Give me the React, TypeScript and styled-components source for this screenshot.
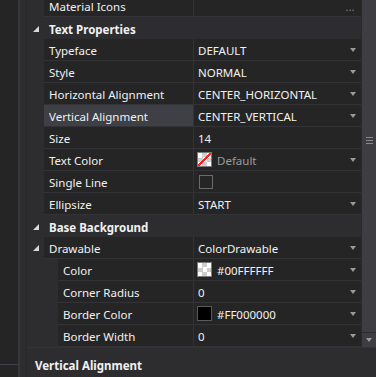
import React from 'react';
import styled, { createGlobalStyle } from 'styled-components';

const Global = createGlobalStyle`
  html, body { margin: 0; padding: 0; background: #2d2d30; }
  body {
    font-family: "Noto Sans", "Liberation Sans", sans-serif;
    font-size: 11.5px;
    color: #f1f1f1;
    overflow: hidden;
  }
`;

const Frame = styled.div`
  display: flex;
  width: 376px;
  height: 377px;
  overflow: hidden;
  background: #2d2d30;
`;

const LeftPanel = styled.div`
  width: 18px;
  display: flex;
  flex-direction: column;
  background: #252526;
  border-right: 2px solid #38383c;
`;

const LeftTop = styled.div`
  height: 364px;
  border-bottom: 1px solid #3f3f46;
`;

const Splitter = styled.div`
  width: 6px;
  background: #2d2d30;
  border-right: 1px solid #28282a;
`;

const Main = styled.div`
  flex: 1;
  display: flex;
  flex-direction: column;
  min-width: 0;
`;

const GridArea = styled.div`
  height: 347px;
  display: flex;
  overflow: hidden;
`;

const Grid = styled.div`
  flex: 1;
  display: flex;
  flex-direction: column;
  overflow: hidden;
  background: #2d2d30;
  & > :first-child { margin-top: -5px; }
`;

const Row = styled.div<{ $indent: number }>`
  display: grid;
  grid-template-columns: ${p => p.$indent}px ${p => 167 - p.$indent}px 1fr;
  height: 22px;
  flex-shrink: 0;
`;

const Gutter = styled.div`
  background: #2d2d30;
  display: flex;
  align-items: center;
  padding-left: 6px;
`;

const NameCell = styled.div<{ $selected?: boolean }>`
  background: ${p => (p.$selected ? '#3f3f46' : '#252526')};
  border-bottom: 1px solid #333337;
  border-right: 1px solid #333337;
  padding: 2px 0 0 5px;
  display: flex;
  align-items: center;
  white-space: nowrap;
  overflow: hidden;
`;

const ValueCell = styled.div`
  background: #252526;
  border-bottom: 1px solid #333337;
  display: flex;
  align-items: center;
  gap: 5px;
  padding: 2px 5px 0 4px;
  white-space: nowrap;
  overflow: hidden;
`;

const Muted = styled.span`
  color: #9a9a9a;
`;

const HeaderRow = styled.div`
  height: 22px;
  flex-shrink: 0;
  display: flex;
  align-items: center;
  background: #2d2d30;
  font-weight: 700;
  padding-top: 2px;
  box-sizing: border-box;
`;

const Expander = styled.span<{ $inHeader?: boolean }>`
  width: 0;
  height: 0;
  border-style: solid;
  border-width: 0 0 6px 6px;
  border-color: transparent transparent #d8d8d8 transparent;
  margin: ${p => (p.$inHeader ? '0 10px 1px 6px' : '0')};
`;

const Arrow = styled.span`
  margin-left: auto;
  margin-bottom: 1px;
  width: 0;
  height: 0;
  border-left: 3.5px solid transparent;
  border-right: 3.5px solid transparent;
  border-top: 4px solid #9a9a9a;
`;

const Ellipsis = styled.span`
  margin-left: auto;
  margin-right: 1px;
  color: #8f8f8f;
  font-size: 10px;
  letter-spacing: 0.5px;
  line-height: 1;
`;

const checker = 'repeating-conic-gradient(#cdcdcd 0 25%, #ffffff 0 50%) 0 0 / 9px 9px';

const Swatch = styled.span<{ $kind: 'none' | 'transparent' | 'black' }>`
  width: 13px;
  height: 13px;
  flex-shrink: 0;
  margin: 0 0 2px -1px;
  border: 1px solid ${p => (p.$kind === 'black' ? '#5a5a5a' : '#7a7a7a')};
  background: ${p =>
    p.$kind === 'black'
      ? '#000000'
      : p.$kind === 'none'
      ? `linear-gradient(to bottom right, transparent calc(50% - 0.8px), #ff2020 calc(50% - 0.8px), #ff2020 calc(50% + 0.8px), transparent calc(50% + 0.8px)), ${checker}`
      : checker};
`;

const CheckBox = styled.span`
  width: 12px;
  height: 12px;
  margin: 0 0 2px 1px;
  border: 1px solid #6a6a6a;
`;

const ScrollBar = styled.div`
  width: 14px;
  display: flex;
  flex-direction: column;
  background: #3e3e42;
  border-left: 1px solid #2a2a2c;
`;

const Thumb = styled.div`
  height: 280px;
  display: flex;
  flex-direction: column;
  align-items: center;
  justify-content: center;
  gap: 2px;
`;

const GripLine = styled.span`
  width: 7px;
  height: 1px;
  background: #8a8a8a;
`;

const Track = styled.div`
  flex: 1;
`;

const ScrollButton = styled.div`
  height: 14px;
  border-top: 1px solid #2d2d30;
  display: flex;
  align-items: center;
  justify-content: center;
  &::after {
    content: '';
    width: 0;
    height: 0;
    border-left: 3.5px solid transparent;
    border-right: 3.5px solid transparent;
    border-top: 4px solid #9a9a9a;
  }
`;

const Description = styled.div`
  flex: 1;
  background: #2d2d30;
  border-top: 1px solid #333337;
  padding: 10px 8px 0;
  font-weight: 700;
  white-space: nowrap;
`;

type Prop = {
  kind: 'prop';
  name: string;
  value?: React.ReactNode;
  indent: number;
  arrow?: boolean;
  expander?: boolean;
  selected?: boolean;
  ellipsis?: boolean;
};
type Header = { kind: 'header'; name: string };
type Item = Prop | Header;

const items: Item[] = [
  { kind: 'prop', name: 'Material Icons', indent: 17, ellipsis: true },
  { kind: 'header', name: 'Text Properties' },
  { kind: 'prop', name: 'Typeface', value: 'DEFAULT', indent: 17, arrow: true },
  { kind: 'prop', name: 'Style', value: 'NORMAL', indent: 17, arrow: true },
  { kind: 'prop', name: 'Horizontal Alignment', value: 'CENTER_HORIZONTAL', indent: 17, arrow: true },
  { kind: 'prop', name: 'Vertical Alignment', value: 'CENTER_VERTICAL', indent: 17, arrow: true, selected: true },
  { kind: 'prop', name: 'Size', value: '14', indent: 17 },
  {
    kind: 'prop',
    name: 'Text Color',
    value: (
      <>
        <Swatch $kind="none" />
        <Muted>Default</Muted>
      </>
    ),
    indent: 17,
    arrow: true,
  },
  { kind: 'prop', name: 'Single Line', value: <CheckBox />, indent: 17 },
  { kind: 'prop', name: 'Ellipsize', value: 'START', indent: 17, arrow: true },
  { kind: 'header', name: 'Base Background' },
  { kind: 'prop', name: 'Drawable', value: 'ColorDrawable', indent: 17, arrow: true, expander: true },
  {
    kind: 'prop',
    name: 'Color',
    value: (
      <>
        <Swatch $kind="transparent" />
        <span>#00FFFFFF</span>
      </>
    ),
    indent: 31,
    arrow: true,
  },
  { kind: 'prop', name: 'Corner Radius', value: '0', indent: 31, arrow: true },
  {
    kind: 'prop',
    name: 'Border Color',
    value: (
      <>
        <Swatch $kind="black" />
        <span>#FF000000</span>
      </>
    ),
    indent: 31,
    arrow: true,
  },
  { kind: 'prop', name: 'Border Width', value: '0', indent: 31, arrow: true },
];

export default function App() {
  return (
    <>
      <Global />
      <Frame>
        <LeftPanel>
          <LeftTop />
        </LeftPanel>
        <Splitter />
        <Main>
          <GridArea>
            <Grid>
              {items.map(it =>
                it.kind === 'header' ? (
                  <HeaderRow key={it.name}>
                    <Expander $inHeader />
                    {it.name}
                  </HeaderRow>
                ) : (
                  <Row key={it.name} $indent={it.indent}>
                    <Gutter>{it.expander && <Expander />}</Gutter>
                    <NameCell $selected={it.selected}>{it.name}</NameCell>
                    <ValueCell>
                      {it.value}
                      {it.arrow && <Arrow />}
                      {it.ellipsis && <Ellipsis>...</Ellipsis>}
                    </ValueCell>
                  </Row>
                )
              )}
            </Grid>
            <ScrollBar>
              <Thumb>
                <GripLine />
                <GripLine />
                <GripLine />
              </Thumb>
              <Track />
              <ScrollButton />
            </ScrollBar>
          </GridArea>
          <Description>Vertical Alignment</Description>
        </Main>
      </Frame>
    </>
  );
}
